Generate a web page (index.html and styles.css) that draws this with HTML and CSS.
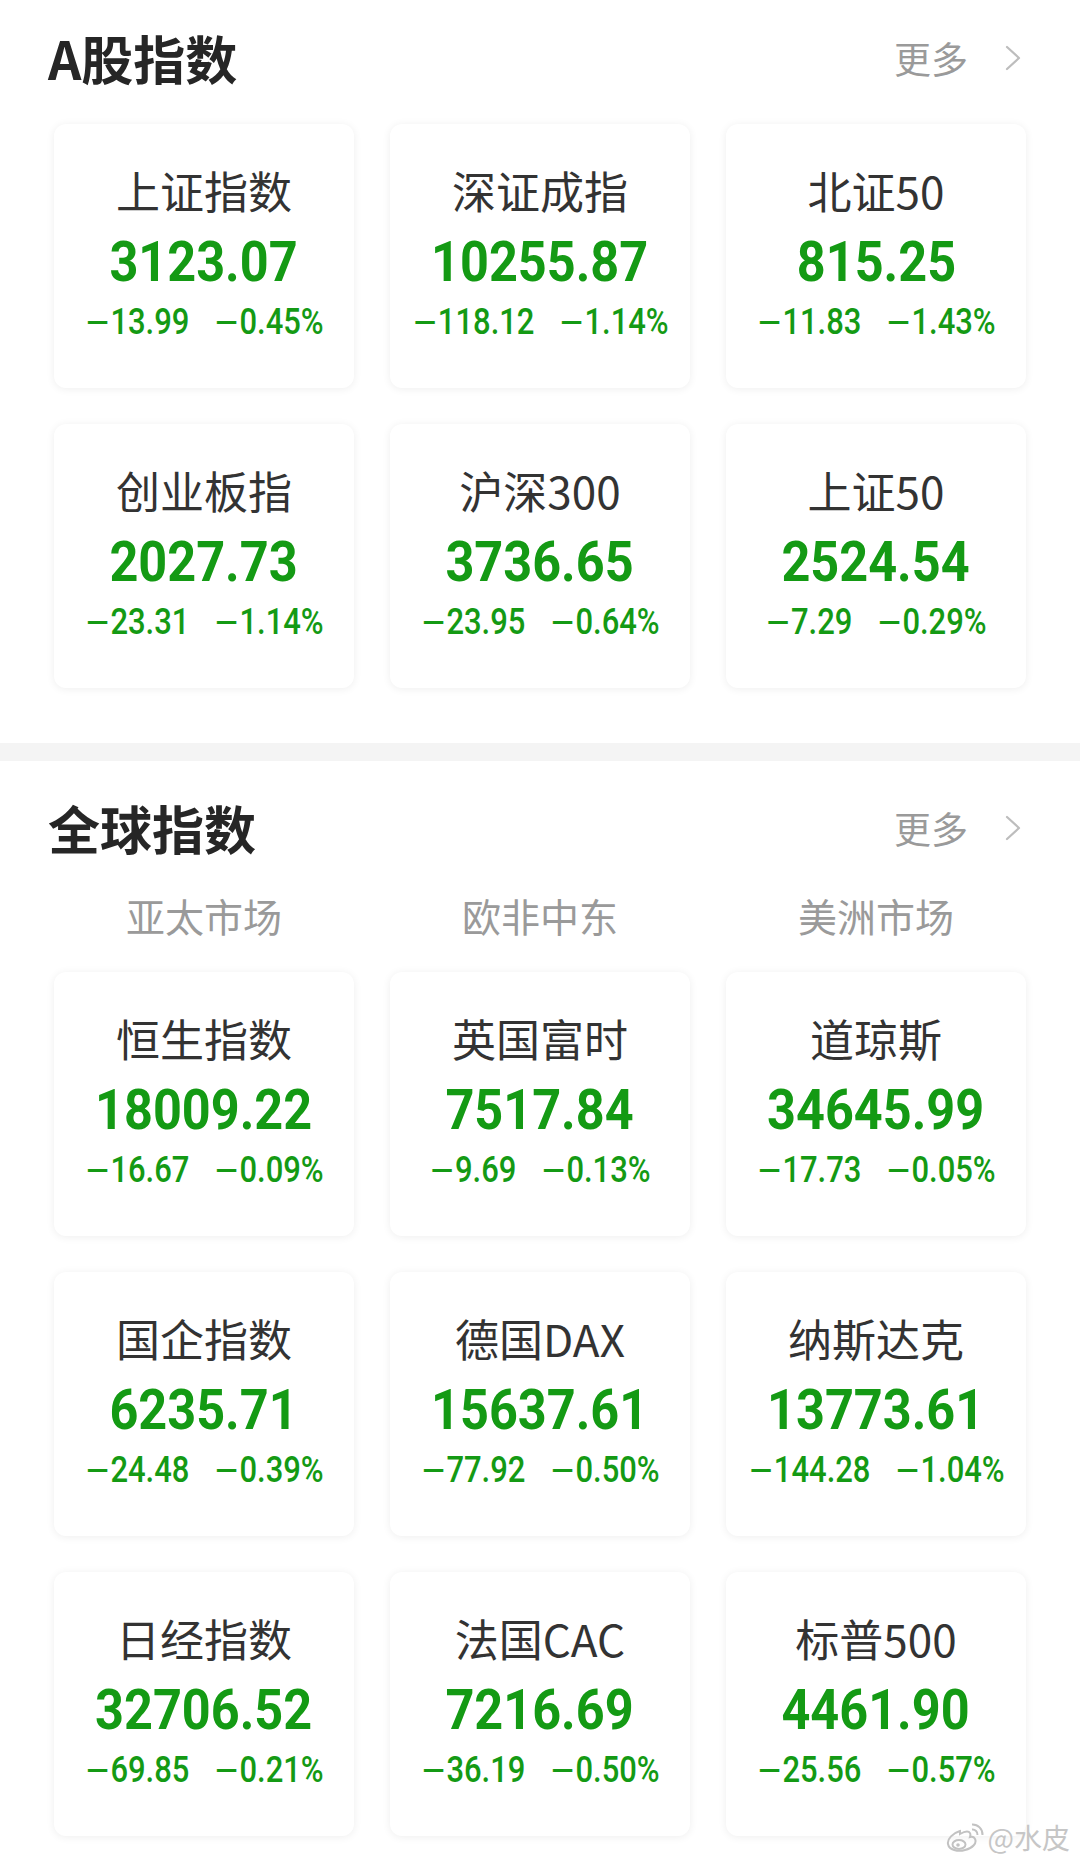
FILE: index.html
```html
<!DOCTYPE html>
<html lang="zh-CN">
<head>
<meta charset="utf-8">
<title>指数</title>
<link rel="stylesheet" href="styles.css">
</head>
<body>
<div class="page">
  <section class="block ashare">
    <div class="head">
      <h2 class="title">A股指数</h2>
      <div class="more">更多<svg class="chev" viewBox="0 0 16 26"><path d="M2 2 L14 13 L2 24" /></svg></div>
    </div>
    <div class="grid cards">
      <div class="card"><div class="name">上证指数</div><div class="val">3123.07</div><div class="chg"><span><i>−</i>13.99</span><span><i>−</i>0.45%</span></div></div>
      <div class="card"><div class="name">深证成指</div><div class="val">10255.87</div><div class="chg"><span><i>−</i>118.12</span><span><i>−</i>1.14%</span></div></div>
      <div class="card"><div class="name">北证50</div><div class="val">815.25</div><div class="chg"><span><i>−</i>11.83</span><span><i>−</i>1.43%</span></div></div>
      <div class="card"><div class="name">创业板指</div><div class="val">2027.73</div><div class="chg"><span><i>−</i>23.31</span><span><i>−</i>1.14%</span></div></div>
      <div class="card"><div class="name">沪深300</div><div class="val">3736.65</div><div class="chg"><span><i>−</i>23.95</span><span><i>−</i>0.64%</span></div></div>
      <div class="card"><div class="name">上证50</div><div class="val">2524.54</div><div class="chg"><span><i>−</i>7.29</span><span><i>−</i>0.29%</span></div></div>
    </div>
  </section>
  <div class="band"></div>
  <section class="block global">
    <div class="head">
      <h2 class="title">全球指数</h2>
      <div class="more">更多<svg class="chev" viewBox="0 0 16 26"><path d="M2 2 L14 13 L2 24" /></svg></div>
    </div>
    <div class="grid tabs">
      <span>亚太市场</span><span>欧非中东</span><span>美洲市场</span>
    </div>
    <div class="grid cards">
      <div class="card"><div class="name">恒生指数</div><div class="val">18009.22</div><div class="chg"><span><i>−</i>16.67</span><span><i>−</i>0.09%</span></div></div>
      <div class="card"><div class="name">英国富时</div><div class="val">7517.84</div><div class="chg"><span><i>−</i>9.69</span><span><i>−</i>0.13%</span></div></div>
      <div class="card"><div class="name">道琼斯</div><div class="val">34645.99</div><div class="chg"><span><i>−</i>17.73</span><span><i>−</i>0.05%</span></div></div>
      <div class="card"><div class="name">国企指数</div><div class="val">6235.71</div><div class="chg"><span><i>−</i>24.48</span><span><i>−</i>0.39%</span></div></div>
      <div class="card"><div class="name">德国DAX</div><div class="val">15637.61</div><div class="chg"><span><i>−</i>77.92</span><span><i>−</i>0.50%</span></div></div>
      <div class="card"><div class="name">纳斯达克</div><div class="val">13773.61</div><div class="chg"><span><i>−</i>144.28</span><span><i>−</i>1.04%</span></div></div>
      <div class="card"><div class="name">日经指数</div><div class="val">32706.52</div><div class="chg"><span><i>−</i>69.85</span><span><i>−</i>0.21%</span></div></div>
      <div class="card"><div class="name">法国CAC</div><div class="val">7216.69</div><div class="chg"><span><i>−</i>36.19</span><span><i>−</i>0.50%</span></div></div>
      <div class="card"><div class="name">标普500</div><div class="val">4461.90</div><div class="chg"><span><i>−</i>25.56</span><span><i>−</i>0.57%</span></div></div>
    </div>
  </section>
  <div class="watermark">
    <svg class="weibo" viewBox="0 0 40 30">
      <path class="wb-body" d="M15 9 C8 11 2 17 3 22 C4 28 13 30 20 28 C28 26 32 21 30 17 C29 14.5 26.5 14.5 25 15 C26 12 25 9.5 22 9.5 C20 9.5 17.5 10.5 15 12 Z"/>
      <ellipse class="wb-line" cx="14" cy="22.5" rx="6.5" ry="4.5"/>
      <circle class="wb-dot" cx="13" cy="23" r="1.8"/>
      <path class="wb-line" d="M27 2.5 A10 10 0 0 1 37.5 13"/>
      <path class="wb-line" d="M27 7.5 A5 5 0 0 1 32.5 13"/>
    </svg>
    <span class="wm-text">@水皮</span>
  </div>
</div>
</body>
</html>
```

FILE: styles.css
```css
* {
  box-sizing: border-box;
  margin: 0;
  padding: 0;
}

body {
  background: #ffffff;
  font-family: "Noto Sans CJK SC", "Noto Sans", sans-serif;
}

.page {
  position: relative;
  width: 1080px;
  min-height: 1868px;
  background: #ffffff;
}

.block {
  padding: 8px 0 55px;
}

.global {
  padding: 17px 0 32px;
}

.head {
  height: 100px;
  display: flex;
  align-items: center;
  justify-content: space-between;
  padding: 0 59px 0 48px;
}

.title {
  font-size: 52px;
  font-weight: 700;
  line-height: 60px;
  color: #262626;
}

.more {
  display: flex;
  align-items: center;
  gap: 37px;
  font-size: 37px;
  line-height: 50px;
  color: #9a9a9a;
}

.chev {
  width: 16px;
  height: 26px;
}

.chev path {
  fill: none;
  stroke: #bdbdbd;
  stroke-width: 2.2;
  stroke-linecap: round;
  stroke-linejoin: round;
}

.grid {
  display: grid;
  grid-template-columns: repeat(3, 300px);
  column-gap: 36px;
  row-gap: 36px;
  padding: 0 54px;
}

.cards {
  margin-top: 16px;
}

.global .cards {
  margin-top: 27px;
}

.tabs {
  margin-top: 7px;
}

.tabs span {
  text-align: center;
  font-size: 39px;
  line-height: 60px;
  color: #9a9a9a;
}

.band {
  height: 18px;
  background: #f4f4f4;
}

.card {
  height: 264px;
  background: #ffffff;
  border-radius: 12px;
  box-shadow: 0 1px 8px rgba(0, 0, 0, 0.07);
  padding-top: 38px;
  display: flex;
  flex-direction: column;
  align-items: center;
}

.name {
  font-size: 44px;
  line-height: 56px;
  color: #333333;
  white-space: nowrap;
}

.val {
  font-family: Roboto, "Liberation Sans", sans-serif;
  font-weight: 700;
  font-size: 56px;
  line-height: 64px;
  margin-top: 12px;
  color: #149a14;
  white-space: nowrap;
  transform: scaleX(0.9);
}

.chg {
  display: flex;
  gap: 28px;
  font-family: Roboto, "Liberation Sans", sans-serif;
  font-weight: 500;
  font-size: 36px;
  line-height: 44px;
  margin-top: 6px;
  color: #149a14;
  white-space: nowrap;
  transform: scaleX(0.86);
}

.chg i {
  font-style: normal;
  font-family: "DejaVu Sans", sans-serif;
  font-weight: 400;
}

.watermark {
  position: absolute;
  right: 10px;
  bottom: 16px;
  display: flex;
  align-items: center;
  gap: 3px;
}

.weibo {
  width: 40px;
  height: 30px;
}

.wb-body,
.wb-line {
  fill: none;
  stroke: #c2c2c2;
  stroke-width: 2;
}

.wb-dot {
  fill: #c2c2c2;
}

.wm-text {
  font-size: 28px;
  line-height: 30px;
  color: #c6c6c6;
  text-shadow: 0 0 2px #ffffff;
}
```
